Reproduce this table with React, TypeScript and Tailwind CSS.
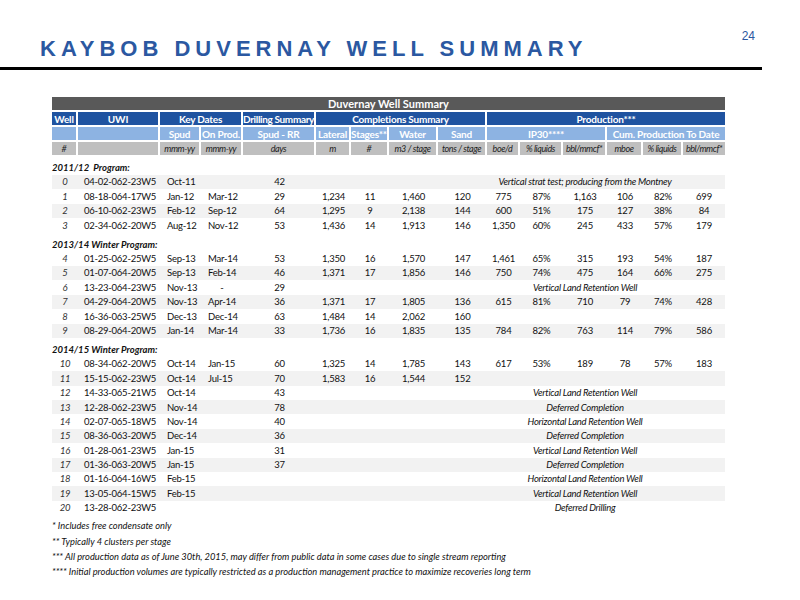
import React from "react";

type Row = {
  n: string;
  uwi: string;
  spud?: string;
  prod?: string;
  days?: string;
  vals?: string[];
  note?: string;
  s?: boolean;
};

const sec1: Row[] = [
  { n: "0", uwi: "04-02-062-23W5", spud: "Oct-11", days: "42", note: "Vertical strat test; producing from the Montney", s: true },
  { n: "1", uwi: "08-18-064-17W5", spud: "Jan-12", prod: "Mar-12", days: "29", vals: ["1,234", "11", "1,460", "120", "775", "87%", "1,163", "106", "82%", "699"] },
  { n: "2", uwi: "06-10-062-23W5", spud: "Feb-12", prod: "Sep-12", days: "64", vals: ["1,295", "9", "2,138", "144", "600", "51%", "175", "127", "38%", "84"], s: true },
  { n: "3", uwi: "02-34-062-20W5", spud: "Aug-12", prod: "Nov-12", days: "53", vals: ["1,436", "14", "1,913", "146", "1,350", "60%", "245", "433", "57%", "179"] },
];
const sec2: Row[] = [
  { n: "4", uwi: "01-25-062-25W5", spud: "Sep-13", prod: "Mar-14", days: "53", vals: ["1,350", "16", "1,570", "147", "1,461", "65%", "315", "193", "54%", "187"] },
  { n: "5", uwi: "01-07-064-20W5", spud: "Sep-13", prod: "Feb-14", days: "46", vals: ["1,371", "17", "1,856", "146", "750", "74%", "475", "164", "66%", "275"], s: true },
  { n: "6", uwi: "13-23-064-23W5", spud: "Nov-13", prod: "-", days: "29", note: "Vertical Land Retention Well" },
  { n: "7", uwi: "04-29-064-20W5", spud: "Nov-13", prod: "Apr-14", days: "36", vals: ["1,371", "17", "1,805", "136", "615", "81%", "710", "79", "74%", "428"], s: true },
  { n: "8", uwi: "16-36-063-25W5", spud: "Dec-13", prod: "Dec-14", days: "63", vals: ["1,484", "14", "2,062", "160"] },
  { n: "9", uwi: "08-29-064-20W5", spud: "Jan-14", prod: "Mar-14", days: "33", vals: ["1,736", "16", "1,835", "135", "784", "82%", "763", "114", "79%", "586"], s: true },
];
const sec3: Row[] = [
  { n: "10", uwi: "08-34-062-20W5", spud: "Oct-14", prod: "Jan-15", days: "60", vals: ["1,325", "14", "1,785", "143", "617", "53%", "189", "78", "57%", "183"] },
  { n: "11", uwi: "15-15-062-23W5", spud: "Oct-14", prod: "Jul-15", days: "70", vals: ["1,583", "16", "1,544", "152"], s: true },
  { n: "12", uwi: "14-33-065-21W5", spud: "Oct-14", days: "43", note: "Vertical Land Retention Well" },
  { n: "13", uwi: "12-28-062-23W5", spud: "Nov-14", days: "78", note: "Deferred Completion", s: true },
  { n: "14", uwi: "02-07-065-18W5", spud: "Nov-14", days: "40", note: "Horizontal Land Retention Well" },
  { n: "15", uwi: "08-36-063-20W5", spud: "Dec-14", days: "36", note: "Deferred Completion", s: true },
  { n: "16", uwi: "01-28-061-23W5", spud: "Jan-15", days: "31", note: "Vertical Land Retention Well" },
  { n: "17", uwi: "01-36-063-20W5", spud: "Jan-15", days: "37", note: "Deferred Completion", s: true },
  { n: "18", uwi: "01-16-064-16W5", spud: "Feb-15", note: "Horizontal Land Retention Well" },
  { n: "19", uwi: "13-05-064-15W5", spud: "Feb-15", note: "Vertical Land Retention Well", s: true },
  { n: "20", uwi: "13-28-062-23W5", note: "Deferred Drilling" },
];

const dataCols =
  "grid grid-cols-[26px_82px_41px_42px_73px_35px_38px_49px_49px_33px_43px_44px_36px_40px_42px]";
const headCols =
  "grid grid-cols-[24px_80px_39px_40px_71px_33px_36px_47px_47px_31px_41px_42px_34px_38px_42px] gap-x-[2px]";

function DataRow({ r }: { r: Row }) {
  const vals = r.vals ?? [];
  return (
    <div
      className={`${dataCols} h-[14.4px] items-center whitespace-nowrap text-[9.5px] leading-none tracking-[-0.25px] text-[#111] ${
        r.s ? "bg-[#f2f2f2]" : ""
      }`}
    >
      <div className="text-center italic text-[#333]">{r.n}</div>
      <div className="pl-[6px]">{r.uwi}</div>
      <div className="pl-[7px]">{r.spud ?? ""}</div>
      <div className={r.prod === "-" ? "text-center" : "pl-[7px]"}>{r.prod ?? ""}</div>
      <div className="text-center">{r.days ?? ""}</div>
      {r.note ? (
        <>
          <div />
          <div />
          <div />
          <div className="col-span-7 pl-[7px] text-center italic">{r.note}</div>
        </>
      ) : (
        Array.from({ length: 10 }).map((_, i) => (
          <div key={i} className="text-center">
            {vals[i] ?? ""}
          </div>
        ))
      )}
    </div>
  );
}

function Section({ title, rows, h }: { title: string; rows: Row[]; h: string }) {
  return (
    <>
      <div
        className={`${h} flex items-end pb-[1px] whitespace-pre text-[9.5px] leading-[12px] font-bold italic text-[#111]`}
      >
        {title}
      </div>
      {rows.map((r) => (
        <DataRow key={r.n} r={r} />
      ))}
    </>
  );
}

export default function App() {
  const hb = "h-[13px] flex items-center justify-center leading-none whitespace-nowrap";
  const blue = `${hb} bg-[#1f53a0] text-white font-bold text-[10px] tracking-[-0.2px]`;
  const light = `${hb} bg-[#8db3e2] text-white font-bold text-[10px] tracking-[-0.2px]`;
  return (
    <div className="w-[800px] h-[600px] bg-white overflow-hidden font-['Lato',sans-serif]">
      <div className="w-[762px] pt-[30px] flex justify-between items-start font-['Liberation_Sans',Arial,sans-serif]">
        <div className="ml-[40px] mt-[8px] text-[22px] leading-[22px] font-bold tracking-[5px] text-[#2b58a1] whitespace-nowrap">
          KAYBOB DUVERNAY WELL SUMMARY
        </div>
        <div className="mr-[7px] text-[12px] leading-[12px] text-[#2b58a1]">24</div>
      </div>
      <div className="mt-[7px] h-[3px] w-[762px] bg-black" />

      <div className="ml-[52px] mt-[27px] w-[673px]">
        <div className={`${hb} bg-[#595959] text-white font-bold text-[11px]`}>Duvernay Well Summary</div>
        <div className={`${headCols} mt-[2px] gap-y-[2px]`}>
          <div className={blue}>Well</div>
          <div className={blue}>UWI</div>
          <div className={`${blue} col-span-2`}>Key Dates</div>
          <div className={`${blue} tracking-[-0.35px]`}>Drilling Summary</div>
          <div className={`${blue} col-span-4`}>Completions Summary</div>
          <div className={`${blue} col-span-6`}>Production***</div>

          <div className={light} />
          <div className={light} />
          <div className={light}>Spud</div>
          <div className={light}>On Prod.</div>
          <div className={light}>Spud - RR</div>
          <div className={light}>Lateral</div>
          <div className={light}>Stages**</div>
          <div className={light}>Water</div>
          <div className={light}>Sand</div>
          <div className={`${light} col-span-3`}>IP30****</div>
          <div className={`${light} col-span-3`}>Cum. Production To Date</div>

          {[
            "#",
            "",
            "mmm-yy",
            "mmm-yy",
            "days",
            "m",
            "#",
            "m3 / stage",
            "tons / stage",
            "boe/d",
            "% liquids",
            "bbl/mmcf*",
            "mboe",
            "% liquids",
            "bbl/mmcf*",
          ].map((t, i) => (
            <div key={i} className={`${hb} bg-[#bfbfbf] italic text-[#222] text-[9px] tracking-[-0.4px]`}>
              {t}
            </div>
          ))}
        </div>

        <Section title="2011/12  Program:" rows={sec1} h="h-[20px]" />
        <Section title="2013/14 Winter Program:" rows={sec2} h="h-[19px]" />
        <Section title="2014/15 Winter Program:" rows={sec3} h="h-[19px]" />
      </div>

      <div className="ml-[52px] mt-[3px] text-[9.3px] leading-[15.3px] italic text-[#111]">
        <div>* Includes free condensate only</div>
        <div>** Typically 4 clusters per stage</div>
        <div>
          *** All production data as of June 30th, 2015, may differ from public data in some cases due to single stream
          reporting
        </div>
        <div>
          **** Initial production volumes are typically restricted as a production management practice to maximize
          recoveries long term
        </div>
      </div>
    </div>
  );
}
